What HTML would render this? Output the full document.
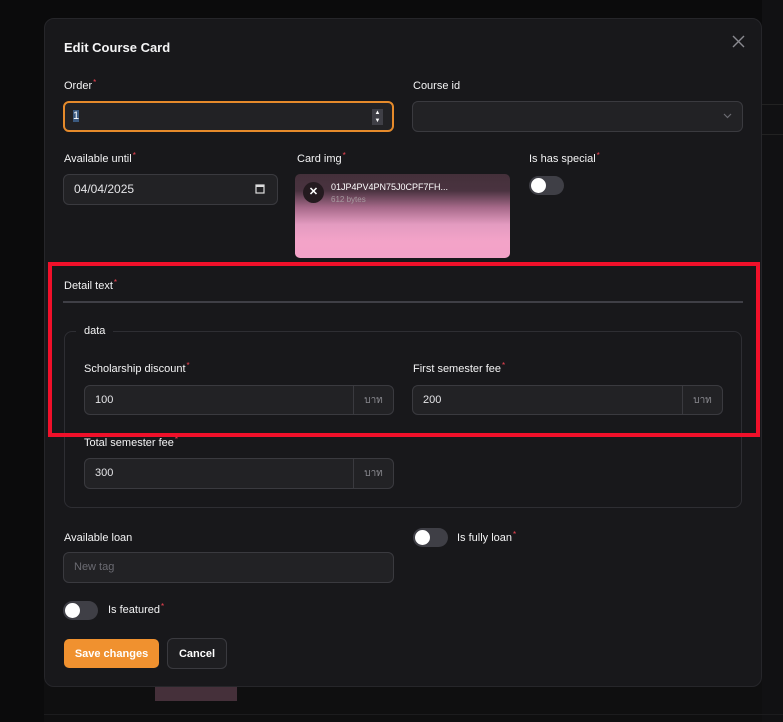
<!DOCTYPE html>
<html><head><style>
*{box-sizing:border-box;margin:0;padding:0}
body{width:783px;height:722px;background:#0b0b0c;font-family:"Liberation Sans",sans-serif;color:#f4f4f5;position:relative;overflow:hidden;font-size:11px}
.a{position:absolute}
.lbl{position:absolute;font-size:11px;color:#f4f4f5;line-height:14px}
.req{color:#f04352;font-size:8px;vertical-align:top;position:relative;top:-3px;margin-left:1px}
.inp{position:absolute;background:#222225;border:1px solid #3a3a3f;border-radius:6px;color:#e4e4e7;font-size:11px;line-height:28px;padding-left:10px}
.tog{position:absolute;width:35px;height:19px;border-radius:10px;background:#3f3f46}
.tog:after{content:"";position:absolute;left:2px;top:2px;width:15px;height:15px;border-radius:50%;background:#fff}
.suf{position:absolute;right:0;top:0;bottom:0;width:40px;border-left:1px solid #3a3a3f;color:#8a8a90;font-size:10px;text-align:center;font-family:"Liberation Sans","Noto Sans CJK SC",sans-serif}
</style></head><body>
<div class="a" style="left:762px;top:0;width:21px;height:722px;background:#111113"></div>
<div class="a" style="left:762px;top:104px;width:21px;height:1px;background:#222"></div>
<div class="a" style="left:762px;top:134px;width:21px;height:1px;background:#222"></div>
<div class="a" style="left:44px;top:680px;width:718px;height:42px;background:#0f0f10"></div>
<div class="a" style="left:155px;top:680px;width:82px;height:21px;background:#45303a"></div>
<div class="a" style="left:44px;top:714px;width:739px;height:1px;background:#1c1c1e"></div>

<div class="a" style="left:44px;top:18px;width:718px;height:669px;background:#18181b;border:1px solid #26262a;border-radius:10px"></div>
<div class="a" style="left:64px;top:40px;font-size:13px;font-weight:bold;color:#f4f4f5">Edit Course Card</div>
<svg class="a" style="left:732px;top:35px" width="13" height="13" viewBox="0 0 13 13"><path d="M1 1L12 12M12 1L1 12" stroke="#8a8a90" stroke-width="1.4"/></svg>

<div class="lbl" style="left:64px;top:79px">Order<span class="req">*</span></div>
<div class="inp" style="left:63px;top:101px;width:331px;height:31px;border:2px solid #e58a2b;line-height:27px;padding-left:8px"><span style="background:#3b5a80;color:#fff">1</span></div>
<div class="a" style="left:372px;top:109px;width:11px;height:16px;background:#3f3f46;color:#fff;font-size:6px;line-height:8px;text-align:center">▲<br>▼</div>
<div class="lbl" style="left:413px;top:79px">Course id</div>
<div class="inp" style="left:412px;top:101px;width:331px;height:31px"></div>
<svg class="a" style="left:723px;top:113px" width="9" height="6"><path d="M1 1L4.5 4.5L8 1" stroke="#6b6b72" fill="none" stroke-width="1.2"/></svg>

<div class="lbl" style="left:64px;top:152px">Available until<span class="req">*</span></div>
<div class="inp" style="left:63px;top:174px;width:215px;height:31px;font-size:12px">04/04/2025</div>
<svg class="a" style="left:255px;top:183px" width="10" height="11"><rect x="1" y="2" width="8" height="8" fill="none" stroke="#ddd" stroke-width="1.2"/><rect x="1" y="2" width="8" height="2" fill="#ddd"/></svg>
<div class="lbl" style="left:297px;top:152px">Card img<span class="req">*</span></div>
<div class="a" style="left:295px;top:174px;width:215px;height:84px;border-radius:5px;background:linear-gradient(180deg,#44303a 0%,#4a3340 20%,#a76a8a 40%,#e39bc0 60%,#f3a3c8 80%,#f3a2c8 100%)"></div>
<div class="a" style="left:303px;top:182px;width:21px;height:21px;border-radius:50%;background:#241a1f;color:#fff;font-size:11px;font-weight:bold;text-align:center;line-height:21px">✕</div>
<div class="a" style="left:331px;top:182px;font-size:9px;color:#fff">01JP4PV4PN75J0CPF7FH...</div>
<div class="a" style="left:331px;top:195px;font-size:8px;color:#a79aa0">612 bytes</div>
<div class="lbl" style="left:529px;top:152px">Is has special<span class="req">*</span></div>
<div class="tog" style="left:529px;top:176px"></div>

<div class="lbl" style="left:64px;top:279px">Detail text<span class="req">*</span></div>
<div class="a" style="left:63px;top:301px;width:680px;height:2px;background:#3f3f46"></div>
<div class="a" style="left:64px;top:331px;width:678px;height:177px;border:1px solid #2e2e33;border-radius:8px"></div>
<div class="a" style="left:76px;top:324px;padding:0 8px;background:#18181b;font-size:11px;line-height:14px">data</div>

<div class="lbl" style="left:84px;top:362px">Scholarship discount<span class="req">*</span></div>
<div class="inp" style="left:84px;top:385px;width:310px;height:30px;line-height:29px">100<div class="suf">บาท</div></div>
<div class="lbl" style="left:413px;top:362px">First semester fee<span class="req">*</span></div>
<div class="inp" style="left:412px;top:385px;width:311px;height:30px;line-height:29px">200<div class="suf">บาท</div></div>
<div class="lbl" style="left:84px;top:436px">Total semester fee<span class="req">*</span></div>
<div class="inp" style="left:84px;top:458px;width:310px;height:31px;line-height:29px">300<div class="suf">บาท</div></div>

<div class="a" style="left:48px;top:262px;width:712px;height:175px;border:4px solid #f0102a"></div>

<div class="lbl" style="left:64px;top:531px">Available loan</div>
<div class="inp" style="left:63px;top:552px;width:331px;height:31px;line-height:29px;color:#6b6b72">New tag</div>
<div class="tog" style="left:413px;top:528px"></div>
<div class="lbl" style="left:457px;top:531px">Is fully loan<span class="req">*</span></div>
<div class="tog" style="left:63px;top:601px"></div>
<div class="lbl" style="left:108px;top:603px">Is featured<span class="req">*</span></div>

<div class="a" style="left:64px;top:639px;width:95px;height:29px;border-radius:5px;background:#f0912f;color:#fff;font-size:11px;font-weight:bold;text-align:center;line-height:30px">Save changes</div>
<div class="a" style="left:167px;top:638px;width:60px;height:31px;border-radius:6px;background:#1e1e21;border:1px solid #3a3a3f;color:#fff;font-size:11px;font-weight:bold;text-align:center;line-height:30px">Cancel</div>
</body></html>
